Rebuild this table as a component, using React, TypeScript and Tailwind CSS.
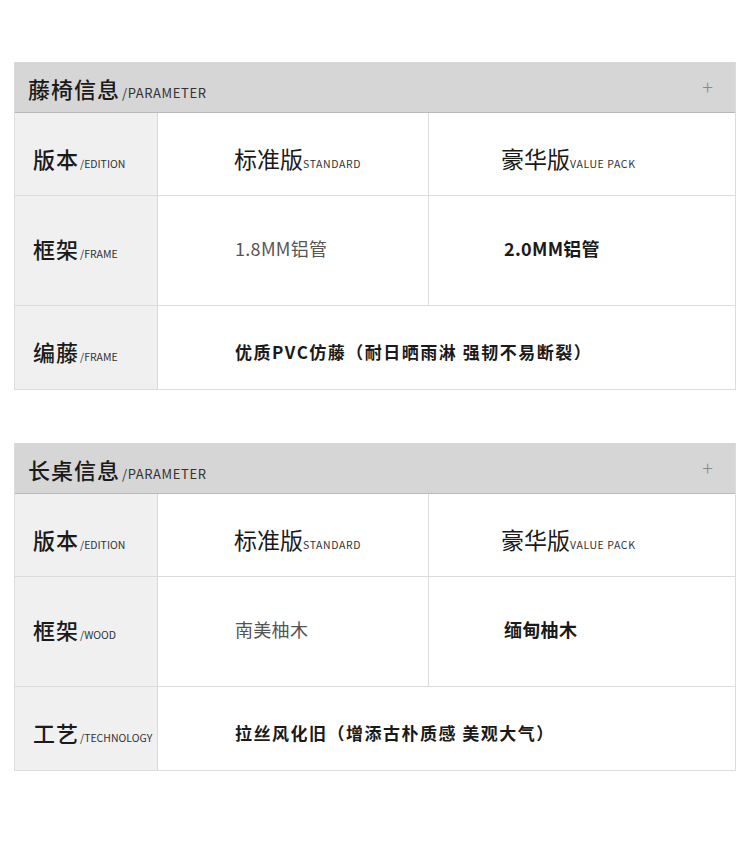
const TABLES = [
  {
    title: '藤椅信息',
    rows: [
      { label: '版本', sub: '/EDITION', kind: 'edition' },
      { label: '框架', sub: '/FRAME', kind: 'pair', a: '1.8MM铝管', b: '2.0MM铝管' },
      { label: '编藤', sub: '/FRAME', kind: 'span', text: '优质PVC仿藤（耐日晒雨淋 强韧不易断裂）' },
    ],
  },
  {
    title: '长桌信息',
    rows: [
      { label: '版本', sub: '/EDITION', kind: 'edition' },
      { label: '框架', sub: '/WOOD', kind: 'pair', a: '南美柚木', b: '缅甸柚木' },
      { label: '工艺', sub: '/TECHNOLOGY', kind: 'span', text: '拉丝风化旧（增添古朴质感 美观大气）' },
    ],
  },
];

type Row = (typeof TABLES)[number]['rows'][number] & { a?: string; b?: string; text?: string };

function Label({ label, sub, shift }: { label: string; sub: string; shift: string }) {
  return (
    <div className={`flex items-center bg-[#f0f0f0] pl-[18px] border-r border-[#d9d9d9] ${shift}`}>
      <div className="flex items-baseline">
        <span className="text-[22px] font-medium text-[#1a1a1a] tracking-[1px]">{label}</span>
        <span className="text-[10.5px] text-[#333] ml-[1px]">{sub}</span>
      </div>
    </div>
  );
}

function TableRow({ row, tall }: { row: Row; tall: boolean }) {
  const h = tall ? 'h-[110px]' : 'h-[83px]';
  const shift = tall ? 'pb-[4px]' : 'pt-[8px]';
  return (
    <div className={`grid grid-cols-[143px_271px_1fr] border-b border-[#dcdcdc] last:border-b-0 ${h}`}>
      <Label label={row.label} sub={row.sub} shift={shift} />
      {row.kind === 'edition' && (
        <>
          <div className={`flex items-center pl-[76px] border-r border-[#dcdcdc] ${shift}`}>
            <div className="flex items-baseline">
              <span className="text-[23px] text-[#1a1a1a]">标准版</span>
              <span className="text-[10.5px] text-[#333] tracking-[0.6px]">STANDARD</span>
            </div>
          </div>
          <div className={`flex items-center pl-[72px] ${shift}`}>
            <div className="flex items-baseline">
              <span className="text-[23px] text-[#1a1a1a]">豪华版</span>
              <span className="text-[10.5px] text-[#333] tracking-[0.6px]">VALUE PACK</span>
            </div>
          </div>
        </>
      )}
      {row.kind === 'pair' && (
        <>
          <div className={`flex items-center pl-[77px] border-r border-[#dcdcdc] ${shift}`}>
            <span className="text-[18px] text-[#555] tracking-[0.3px]">{row.a}</span>
          </div>
          <div className={`flex items-center pl-[75px] ${shift}`}>
            <span className="text-[18px] font-bold text-[#1a1a1a] tracking-[0.3px]">{row.b}</span>
          </div>
        </>
      )}
      {row.kind === 'span' && (
        <div className={`col-span-2 flex items-center pl-[77px] ${shift}`}>
          <span className="text-[17px] font-bold text-[#1a1a1a] tracking-[1.5px]">{row.text}</span>
        </div>
      )}
    </div>
  );
}

export default function App() {
  return (
    <div
      className="w-[750px] h-[867px] bg-white pt-[62px] pl-[14px]"
      style={{ fontFamily: '"Noto Sans CJK SC", "Noto Sans", sans-serif' }}
    >
      <div className="flex flex-col gap-[53px]">
        {TABLES.map((t) => (
          <div key={t.title} className="w-[722px] border-x border-b border-[#dcdcdc]">
            <div className="flex items-center h-[51px] bg-[#d6d6d6] border-b border-[#b8b8b8] pl-[13px] pr-[22px]">
              <div className="flex items-baseline pt-[2px]">
                <span className="text-[22px] font-medium text-[#1a1a1a] tracking-[1px]">{t.title}</span>
                <span className="text-[13px] text-[#333] ml-[2px] tracking-[0.6px]">/PARAMETER</span>
              </div>
              <span className="ml-auto text-[20px] font-light text-[#8a8a8a] leading-none">+</span>
            </div>
            {t.rows.map((r, i) => (
              <TableRow key={i} row={r as Row} tall={i === 1} />
            ))}
          </div>
        ))}
      </div>
    </div>
  );
}
